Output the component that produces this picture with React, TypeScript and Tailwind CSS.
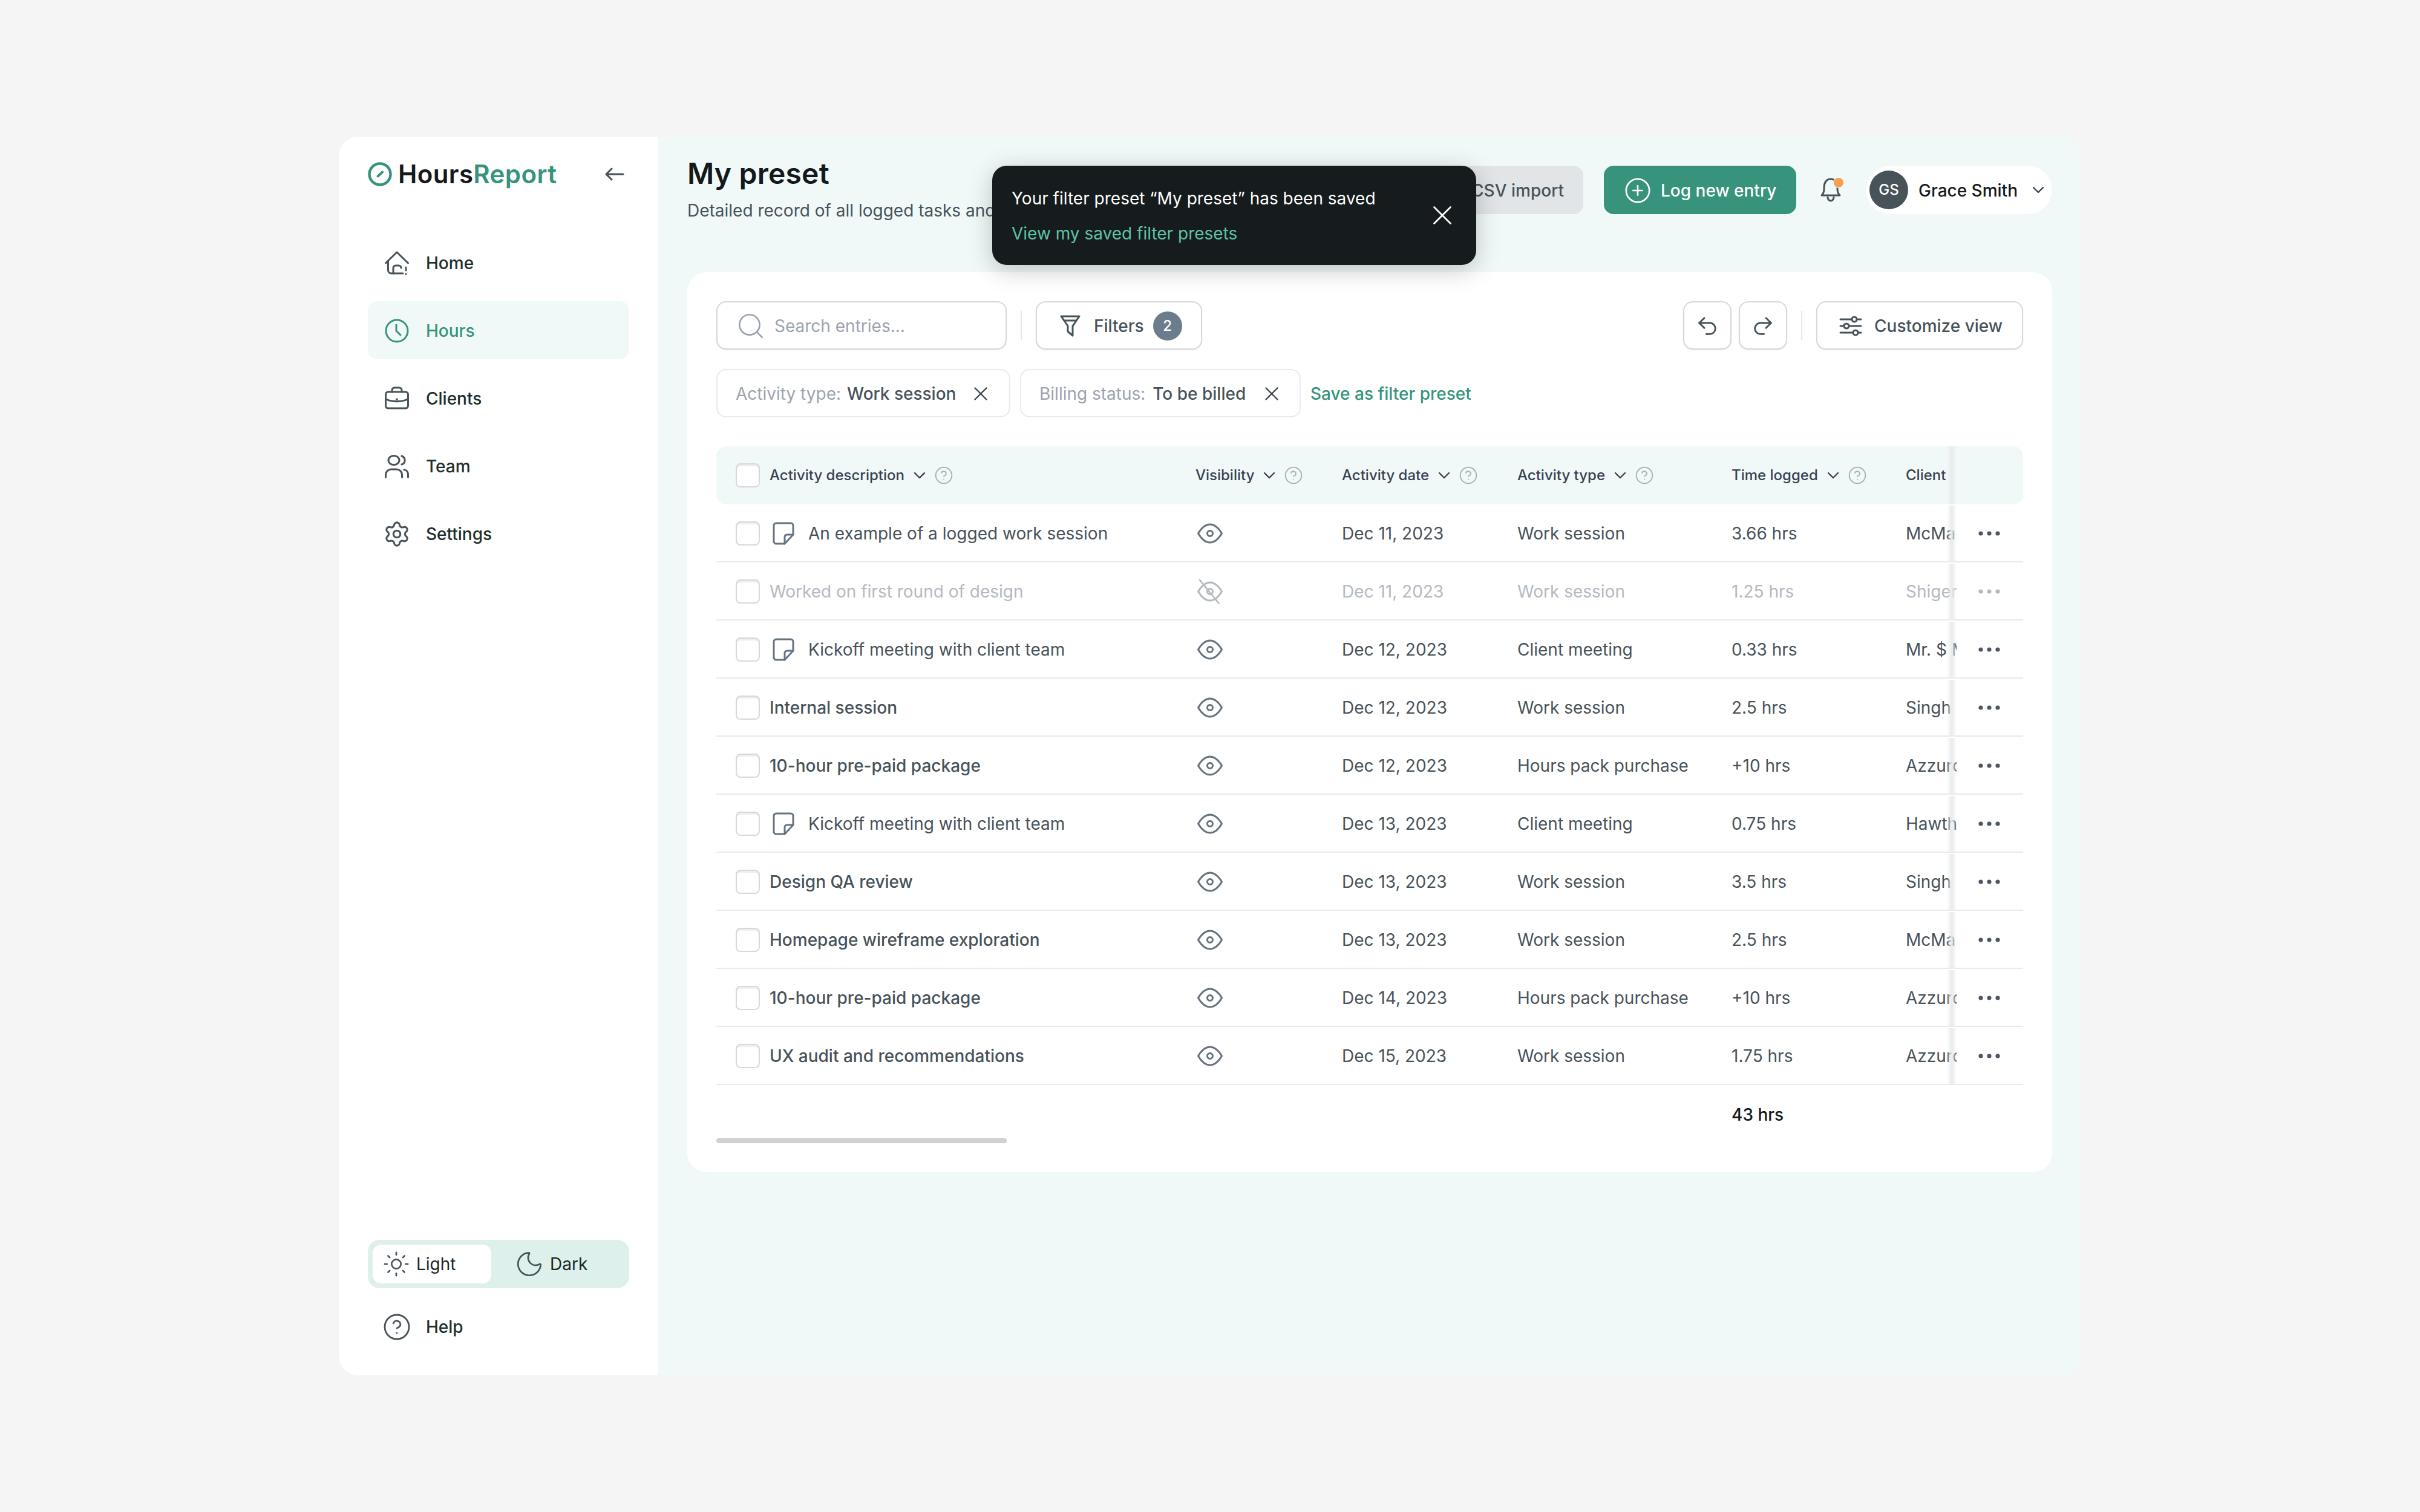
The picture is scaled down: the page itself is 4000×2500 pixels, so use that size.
import React from 'react';
import {
  ChevronDown,
  CircleHelp,
  CirclePlus,
  Moon,
  Redo2,
  Search,
  Settings,
  Sun,
  Undo2,
  X,
} from 'lucide-react';

const iconStroke = {
  fill: 'none',
  stroke: 'currentColor',
  strokeWidth: 3,
  strokeLinecap: 'round' as const,
  strokeLinejoin: 'round' as const,
};

const LogoIcon = () => (
  <svg width="40" height="40" viewBox="0 0 40 40" className="text-[#38937d]" {...iconStroke} strokeWidth={4.5}>
    <circle cx="20" cy="20" r="17.5" />
    <path d="M16.5 23.5 L24 16.5" strokeWidth={4} />
  </svg>
);

const HomeIcon = () => (
  <svg width="40" height="40" viewBox="0 0 40 40" {...iconStroke}>
    <path d="M1.5 20 L20 2 L38.5 20" />
    <path d="M5.5 17 V32 a5 5 0 0 0 5 5 H30" />
    <path d="M14 37 V28 a4 4 0 0 1 4 -4 h5 a4 4 0 0 1 4 4" />
    <path d="M35 27 v5 M35 38 v.2" />
  </svg>
);

const ClockIcon = () => (
  <svg width="40" height="40" viewBox="0 0 40 40" {...iconStroke}>
    <circle cx="20" cy="20" r="18" />
    <path d="M19 10 V20 L26 27" />
  </svg>
);

const BriefcaseIcon = () => (
  <svg width="40" height="40" viewBox="0 0 40 40" {...iconStroke}>
    <rect x="1.5" y="9" width="37" height="27" rx="4" />
    <path d="M12 9 V6 a4 4 0 0 1 4 -4 h8 a4 4 0 0 1 4 4 V9" />
    <path d="M2 21 C12 26 28 26 38 21" />
    <path d="M20 21 v.4" strokeWidth={3.4} />
  </svg>
);

const TeamIcon = () => (
  <svg width="40" height="40" viewBox="0 0 40 40" {...iconStroke}>
    <ellipse cx="15" cy="10" rx="9" ry="7.5" />
    <path d="M28 3 a8 7.5 0 0 1 0 14" />
    <path d="M1.5 38 V34 a9 9 0 0 1 9 -9 h9 a9 9 0 0 1 9 9 v4" />
    <path d="M32 25.5 a8 8 0 0 1 6.5 8 V38" />
  </svg>
);

const NoteIcon = () => (
  <svg width="40" height="40" viewBox="0 0 40 40" {...iconStroke}>
    <path d="M36 22 V7 a4 4 0 0 0 -4 -4 H8 a4 4 0 0 0 -4 4 V33 a4 4 0 0 0 4 4 H22 L36 22 Z" />
    <path d="M36 22 H26 a4 4 0 0 0 -4 4 V37" />
  </svg>
);

const EyeIcon = ({ off }: { off?: boolean }) => (
  <svg width="44" height="40" viewBox="0 0 44 40" {...iconStroke}>
    <path d="M2.5 20 C9 9 16 5 22 5 C28 5 35 9 41.5 20 C35 31 28 35 22 35 C16 35 9 31 2.5 20 Z" />
    <circle cx="22" cy="20" r="4.5" />
    {off && <path d="M5 1 L37 40" strokeWidth={2.6} />}
  </svg>
);

const FunnelIcon = () => (
  <svg width="34" height="36" viewBox="0 0 34 36" {...iconStroke}>
    <path d="M2 2 H32 L21 18 V34 L13 27 V18 Z" />
    <path d="M7 9 H27" />
  </svg>
);

const SlidersIcon = () => (
  <svg width="38" height="36" viewBox="0 0 38 36" {...iconStroke}>
    <path d="M2 7 H21 M29 7 H36 M2 18 H8 M16 18 H36 M2 29 H23 M31 29 H36" />
    <circle cx="25" cy="7" r="4" />
    <circle cx="12" cy="18" r="4" />
    <circle cx="27" cy="29" r="4" />
  </svg>
);

const BellIcon = () => (
  <div className="relative h-[42px] w-[40px] text-[#475259]">
    <svg width="36" height="42" viewBox="0 0 36 42" {...iconStroke}>
      <path d="M3 30 C7 26 7 22 7 17 C7 9 11 3 18 3 C25 3 29 9 29 17 C29 22 29 26 33 30 Z" />
      <path d="M13 33 a5 6 0 0 0 10 0" />
    </svg>
    <span className="absolute right-0 top-0 h-[18px] w-[18px] rounded-full border border-white bg-[#f6a052]" />
  </div>
);

const Dots = ({ dim }: { dim?: boolean }) => (
  <svg width="36" height="8" viewBox="0 0 36 8" className={dim ? 'text-[#b4b9c0]' : 'text-[#4b5563]'} fill="currentColor">
    <circle cx="4" cy="4" r="3.6" />
    <circle cx="18" cy="4" r="3.6" />
    <circle cx="32" cy="4" r="3.6" />
  </svg>
);

const Checkbox = () => (
  <span className="block h-[40px] w-[40px] shrink-0 rounded-[8px] border-2 border-[#d5d8dc] bg-white shadow-[inset_0_3px_0_#eceef0]" />
);

const navItems = [
  { label: 'Home', icon: <HomeIcon /> },
  { label: 'Hours', icon: <ClockIcon />, active: true },
  { label: 'Clients', icon: <BriefcaseIcon /> },
  { label: 'Team', icon: <TeamIcon /> },
  { label: 'Settings', icon: <Settings size={46} strokeWidth={1.6} className="-mx-[3px]" /> },
];

function Sidebar() {
  return (
    <aside className="flex w-[528px] shrink-0 flex-col bg-white px-[48px] pb-[40px] pt-[42px]">
      <div className="flex h-[40px] items-center justify-between">
        <div className="flex items-center gap-[10px]">
          <LogoIcon />
          <span className="text-[42px] font-semibold leading-none tracking-[0.4px] text-[#15191b]">
            Hours<span className="text-[#38937d]">Report</span>
          </span>
        </div>
        <svg width="32" height="24" viewBox="0 0 32 24" className="mr-[8px] text-[#475259]" {...iconStroke}>
          <path d="M30 12 H2 M11 3 L2 12 L11 21" />
        </svg>
      </div>
      <nav className="mt-[78px] flex flex-col gap-[16px]">
        {navItems.map((item) => (
          <div
            key={item.label}
            className={`flex h-[96px] items-center gap-[28px] rounded-[16px] pl-[28px] pt-[2px] text-[28px] font-medium ${
              item.active ? 'bg-[#f0f9f8] text-[#38937d]' : 'text-[#1d2f2c]'
            }`}
          >
            <span className={item.active ? 'text-[#38937d]' : 'text-[#475259]'}>{item.icon}</span>
            {item.label}
          </div>
        ))}
      </nav>
      <div className="mt-auto flex h-[80px] items-center rounded-[20px] bg-[#ddf0eb] p-[8px] text-[28px] text-[#1d2729]">
        <div className="flex h-[64px] w-[196px] items-center gap-[10px] rounded-[14px] bg-white pl-[16px]">
          <Sun size={46} strokeWidth={1.4} className="text-[#475259]" />
          Light
        </div>
        <div className="ml-[38px] flex items-center gap-[9px]">
          <Moon size={50} strokeWidth={1.3} className="text-[#475259]" />
          Dark
        </div>
      </div>
      <div className="mt-[24px] flex h-[80px] items-center gap-[24px] pl-[24px] text-[28px] font-medium text-[#1d2f2c]">
        <CircleHelp size={48} strokeWidth={1.4} className="text-[#475259]" />
        Help
      </div>
    </aside>
  );
}

const btn = 'flex h-[80px] items-center rounded-[16px] border-2 border-[#d5d8dc] bg-white pt-[2px] shadow-[0_1px_2px_rgba(0,0,0,0.08)]';

function Header() {
  return (
    <header className="flex h-[188px] items-start justify-between">
      <div>
        <h1 className="text-[48px] font-semibold leading-[50px] tracking-[0.2px] text-[#15191b]">My preset</h1>
        <p className="mt-[16px] text-[28px] leading-[40px] text-[#475259]">Detailed record of all logged tasks and activities</p>
      </div>
      <div className="mt-[12px] flex items-center">
        <div className="flex h-[80px] items-center rounded-[16px] bg-[#e1e5e8] px-[32px] pt-[2px] text-[28px] font-medium text-[#475259]">
          CSV import
        </div>
        <div className="ml-[34px] flex h-[80px] w-[318px] items-center gap-[15px] rounded-[16px] bg-[#38937d] pl-[33px] pt-[2px] text-[28px] font-medium text-white">
          <CirclePlus size={46} strokeWidth={1.4} />
          Log new entry
        </div>
        <div className="ml-[39px]">
          <BellIcon />
        </div>
        <div className="ml-[36px] flex h-[80px] w-[308px] items-center rounded-full bg-white pl-[6px] shadow-[0_0_2px_rgba(0,0,0,0.03)]">
          <span className="flex h-[64px] w-[64px] items-center justify-center rounded-full bg-[#475259] text-[24px] font-medium text-white">
            GS
          </span>
          <span className="ml-[17px] pt-[2px] text-[28px] font-medium text-[#15191b]">Grace Smith</span>
          <ChevronDown size={32} strokeWidth={1.8} className="ml-[18px] text-[#374151]" />
        </div>
      </div>
    </header>
  );
}

function Toolbar() {
  return (
    <div className="flex flex-col gap-[32px]">
      <div className="flex items-center justify-between">
        <div className="flex items-center">
          <div className={`${btn} w-[480px] pl-[30px] text-[28px] text-[#9ca3af]`}>
            <Search size={50} strokeWidth={1.3} className="text-[#9ca3af]" />
            <span className="ml-[14px]">Search entries...</span>
          </div>
          <div className="mx-[23px] h-[48px] w-[2px] bg-[#e5e7eb]" />
          <div className={`${btn} w-[275px] pl-[38px] text-[28px] font-medium text-[#475259]`}>
            <FunnelIcon />
            <span className="ml-[22px]">Filters</span>
            <span className="ml-[15px] flex h-[48px] w-[48px] items-center justify-center rounded-full bg-[#6b7c8c] text-[24px] text-white">
              2
            </span>
          </div>
        </div>
        <div className="flex items-center">
          <div className={`${btn} w-[80px] justify-center text-[#475259]`}>
            <Undo2 size={40} strokeWidth={1.7} />
          </div>
          <div className={`${btn} ml-[12px] w-[80px] justify-center text-[#475259]`}>
            <Redo2 size={40} strokeWidth={1.7} />
          </div>
          <div className="mx-[23px] h-[48px] w-[2px] bg-[#e5e7eb]" />
          <div className={`${btn} w-[342px] pl-[36px] text-[28px] font-medium text-[#475259]`}>
            <SlidersIcon />
            <span className="ml-[20px]">Customize view</span>
          </div>
        </div>
      </div>
      <div className="flex items-center gap-[16px] text-[28px]">
        <div className="flex h-[80px] w-[486px] items-center rounded-[16px] border-2 border-[#e8eaec] pl-[30px] pt-[2px] font-medium text-[#475259]">
          <span className="mr-[2px] font-normal text-[#9ca3af]">Activity type:&nbsp;</span>Work session
          <X size={38} strokeWidth={1.5} className="ml-[22px] text-[#374151]" />
        </div>
        <div className="flex h-[80px] w-[464px] items-center rounded-[16px] border-2 border-[#e8eaec] pl-[30px] pt-[2px] font-medium text-[#475259]">
          <span className="mr-[4px] font-normal text-[#9ca3af]">Billing status:&nbsp;</span>To be billed
          <X size={38} strokeWidth={1.5} className="ml-[24px] text-[#374151]" />
        </div>
        <span className="pt-[2px] font-medium text-[#38937d]">Save as filter preset</span>
      </div>
    </div>
  );
}

const grid = 'grid grid-cols-[792px_242px_290px_354px_288px_84px_110px] items-center';

const HeadSuffix = () => (
  <>
    <ChevronDown size={32} strokeWidth={1.8} className="ml-[9px] text-[#374151]" />
    <CircleHelp size={32} strokeWidth={1.4} className="ml-[8px] text-[#a3b0b5]" />
  </>
);

const HeadCell = ({ label }: { label: string }) => (
  <div className="flex items-center">
    {label}
    <HeadSuffix />
  </div>
);

type Row = {
  title: string;
  note?: boolean;
  dim?: boolean;
  date: string;
  type: string;
  time: string;
  client: string;
};

const rows: Row[] = [
  { title: 'An example of a logged work session', note: true, date: 'Dec 11, 2023', type: 'Work session', time: '3.66 hrs', client: 'McMahon' },
  { title: 'Worked on first round of design', dim: true, date: 'Dec 11, 2023', type: 'Work session', time: '1.25 hrs', client: 'Shigeru' },
  { title: 'Kickoff meeting with client team', note: true, date: 'Dec 12, 2023', type: 'Client meeting', time: '0.33 hrs', client: 'Mr. $ Money' },
  { title: 'Internal session', date: 'Dec 12, 2023', type: 'Work session', time: '2.5 hrs', client: 'Singh Co' },
  { title: '10-hour pre-paid package', date: 'Dec 12, 2023', type: 'Hours pack purchase', time: '+10 hrs', client: 'Azzuro' },
  { title: 'Kickoff meeting with client team', note: true, date: 'Dec 13, 2023', type: 'Client meeting', time: '0.75 hrs', client: 'Hawthorne' },
  { title: 'Design QA review', date: 'Dec 13, 2023', type: 'Work session', time: '3.5 hrs', client: 'Singh Co' },
  { title: 'Homepage wireframe exploration', date: 'Dec 13, 2023', type: 'Work session', time: '2.5 hrs', client: 'McMahon' },
  { title: '10-hour pre-paid package', date: 'Dec 14, 2023', type: 'Hours pack purchase', time: '+10 hrs', client: 'Azzuro' },
  { title: 'UX audit and recommendations', date: 'Dec 15, 2023', type: 'Work session', time: '1.75 hrs', client: 'Azzuro' },
];

const StickyEdge = () => (
  <span className="absolute inset-y-0 -left-[16px] w-[16px] bg-gradient-to-r from-transparent via-[#e8eaeb] to-transparent" />
);

function Table() {
  return (
    <div className="mt-[48px] text-[28px]">
      <div className={`${grid} h-[96px] rounded-[16px] bg-[#f0f9f8] text-[24px] font-medium text-[#374151]`}>
        <div className="flex items-center pl-[32px]">
          <Checkbox />
          <span className="ml-[16px]">Activity description</span>
          <HeadSuffix />
        </div>
        <HeadCell label="Visibility" />
        <HeadCell label="Activity date" />
        <HeadCell label="Activity type" />
        <HeadCell label="Time logged" />
        <div className="overflow-hidden">Client</div>
        <div className="relative h-full">
          <StickyEdge />
        </div>
      </div>
      {rows.map((row, i) => (
        <div
          key={i}
          className={`${grid} h-[96px] border-b-2 border-[#e8eaec] pt-[2px] ${row.dim ? 'text-[#b4b9c0]' : 'text-[#475259]'}`}
        >
          <div className="flex items-center pl-[32px]">
            <Checkbox />
            {row.note && (
              <span className="ml-[19px] text-[#667380]">
                <NoteIcon />
              </span>
            )}
            <span className={row.note ? 'ml-[21px]' : `ml-[16px] ${row.dim ? '' : 'font-medium'}`}>{row.title}</span>
          </div>
          <div className={row.dim ? 'pl-[2px] text-[#b4b9c0]' : 'pl-[2px] text-[#667380]'}>
            <EyeIcon off={row.dim} />
          </div>
          <div>{row.date}</div>
          <div>{row.type}</div>
          <div>{row.time}</div>
          <div className="overflow-hidden whitespace-nowrap">{row.client}</div>
          <div className="relative flex h-full items-center pl-[36px]">
            <StickyEdge />
            <Dots dim={row.dim} />
          </div>
        </div>
      ))}
      <div className={`${grid} h-[96px] pt-[2px] font-medium text-[#15191b]`}>
        <div />
        <div />
        <div />
        <div />
        <div>43 hrs</div>
      </div>
      <div className="-mt-[8px] h-[8px] w-[480px] rounded-full bg-[#cfd1d1]" />
    </div>
  );
}

function Toast() {
  return (
    <div className="absolute left-[552px] top-[48px] flex h-[164px] w-[800px] items-center justify-between rounded-[24px] bg-[#161b1d] pl-[32px] pr-[29px] text-[28px] text-white shadow-[0_8px_40px_rgba(0,0,0,0.22)]">
      <div className="flex flex-col gap-[18px] pt-[2px] leading-[40px]">
        <span>Your filter preset “My preset” has been saved</span>
        <span className="text-[#5ec4a8]">View my saved filter presets</span>
      </div>
      <X size={54} strokeWidth={1.2} />
    </div>
  );
}

export default function App() {
  return (
    <div className="flex h-[2500px] w-[4000px] items-center justify-center bg-[#f5f5f5] [font-family:Inter,sans-serif]">
      <div className="flex h-[2048px] w-[2880px] overflow-hidden rounded-[32px]">
        <Sidebar />
        <main className="relative flex-1 bg-[#f0f9f8] px-[48px] pt-[36px]">
          <Header />
          <section className="h-[1488px] rounded-[32px] bg-white p-[48px]">
            <Toolbar />
            <Table />
          </section>
          <Toast />
        </main>
      </div>
    </div>
  );
}
